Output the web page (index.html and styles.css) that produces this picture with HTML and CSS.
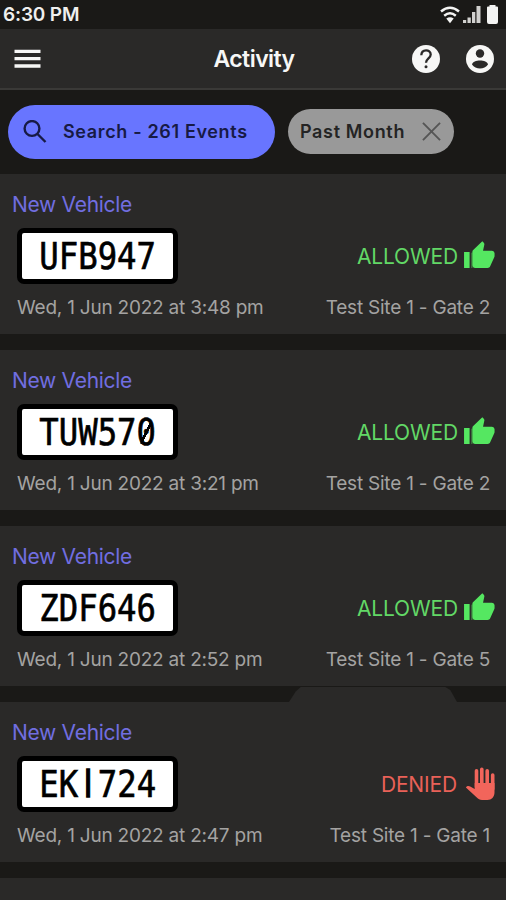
FILE: index.html
```
<!DOCTYPE html>
<html lang="en">
<head>
<meta charset="utf-8">
<title>Activity</title>
<link rel="stylesheet" href="styles.css">
</head>
<body>
<svg class="defs" aria-hidden="true">
  <symbol id="thumb" viewBox="0 0 24 24"><path d="M1 21h4V9H1v12zm22-11c0-1.100-.9-2-2-2h-6.310l.95-4.570.03-.32c0-.41-.17-.79-.44-1.060L14.170 1 7.590 7.590C7.220 7.950 7 8.450 7 9v10c0 1.100.9 2 2 2h9c.83 0 1.540-.5 1.840-1.220l3.020-7.050c.09-.23.14-.47.14-.73v-2z" transform="translate(-1 0) scale(1.040 1)"/><path d="M5.200 9.500h1.300V21H5.200z" opacity=".35"/></symbol>
  <symbol id="hand" viewBox="0 0 30 34"><g fill="none" stroke-width="3.600" stroke-linecap="round"><path d="M11 3.800V20M16.300 2.300V20M21.700 3.800V20M27.200 8V22"/></g><path d="M9.200 16H29v9.500c0 4.500-3 7.500-7 7.500h-5.500c-2.200 0-3.800-.8-5.200-2.400L.4 20.600c1.200-1.700 2.800-1.900 4.300-1L9.200 22z"/></symbol>
</svg>
<div class="page">
<div class="status-bar">
  <span class="clock">6:30 PM</span>
  <svg class="signals" viewBox="0 0 58 20" aria-hidden="true">
    <g fill="none" stroke="#f4f4f3" stroke-width="2.500"><path d="M.5 6.500q9-7.500 18 0"/><path d="M3.700 10.700q5.800-4.800 11.600 0"/></g>
    <path fill="#f4f4f3" d="M5.800 13.500q3.700-2.600 7.400 0L9.500 18.300z"/>
    <g fill="#d2d1cf"><path d="M22.500 15h3.200v3h-3.200zM27 12.500h3.300V18H27zM31.500 7h3.300v11h-3.300zM36 1h4v17h-4z"/></g>
    <path fill="#f4f4f3" d="M49 0h6v1.500h1.500q1 0 1 1V17q0 2-2 2h-7q-2 0-2-2V2.500q0-1 1-1H49z"/>
  </svg>
</div>
<header class="app-bar">
  <svg class="menu" viewBox="0 0 27 19"><path d="M.5 2.300h26M.5 9.700h26M.5 17h26"/></svg>
  <h1>Activity</h1>
  <div class="actions">
    <svg viewBox="0 0 28 28"><circle cx="14" cy="14" r="14" fill="#f7f7f6"/><path d="M9.300 10.200c.2-6.500 9.400-6.200 9.400-.7 0 3.700-4.700 4.100-4.700 8.300" fill="none" stroke="#2a2928" stroke-width="2.300"/><circle cx="14" cy="21.800" r="1.500" fill="#2a2928"/></svg>
    <svg viewBox="0 0 28 28"><circle cx="14" cy="14" r="14" fill="#f7f7f6"/><circle cx="14" cy="8.500" r="4.200" fill="#2a2928"/><path fill="#2a2928" d="M6 19.500c1-5.300 15-5.300 16 0-3.500 5.200-12.500 5.200-16 0z"/></svg>
  </div>
</header>
<div class="filters">
  <div class="search"><svg viewBox="0 0 24 24"><circle cx="9" cy="8.500" r="7.400"/><path d="M14.500 14l8 8"/></svg><span>Search - 261 Events</span></div>
  <div class="chip"><span>Past Month</span><svg viewBox="0 0 20 20"><path d="M1 1l18 18M19 1L1 19"/></svg></div>
</div>
<main class="events">
  <article class="event">
    <h2>New Vehicle</h2>
    <div class="row"><div class="plate"><span>UFB947</span></div><div class="result allowed"><span>ALLOWED</span><svg><use href="#thumb"/></svg></div></div>
    <div class="meta"><time>Wed, 1 Jun 2022 at 3:48 pm</time><span>Test Site 1 - Gate 2</span></div>
  </article>
  <article class="event">
    <h2>New Vehicle</h2>
    <div class="row"><div class="plate"><span>TUW57<i class="zero">0</i></span></div><div class="result allowed"><span>ALLOWED</span><svg><use href="#thumb"/></svg></div></div>
    <div class="meta"><time>Wed, 1 Jun 2022 at 3:21 pm</time><span>Test Site 1 - Gate 2</span></div>
  </article>
  <article class="event">
    <h2>New Vehicle</h2>
    <div class="row"><div class="plate"><span>ZDF646</span></div><div class="result allowed"><span>ALLOWED</span><svg><use href="#thumb"/></svg></div></div>
    <div class="meta"><time>Wed, 1 Jun 2022 at 2:52 pm</time><span>Test Site 1 - Gate 5</span></div>
  </article>
  <article class="event tabbed">
    <h2>New Vehicle</h2>
    <div class="row"><div class="plate"><span>EK<i class="stem">I</i>724</span></div><div class="result denied"><span>DENIED</span><svg><use href="#hand"/></svg></div></div>
    <div class="meta"><time>Wed, 1 Jun 2022 at 2:47 pm</time><span>Test Site 1 - Gate 1</span></div>
  </article>
  <article class="event"></article>
</main>
</div>
</body>
</html>
```
FILE: styles.css
```
* { box-sizing: border-box; }
html { background: #2a2928; }
body { margin: 0; background: #2a2928; font-family: Inter, sans-serif; }
.page { height: 900px; overflow: hidden; background: #1a1917; }
.defs { display: none; }
.status-bar { height: 29px; display: flex; justify-content: space-between; padding: 5px 7px 0 3px; }
.clock { color: #efefee; font-size: 19px; font-weight: 600; line-height: 20px; white-space: nowrap; letter-spacing: -.15px; }
.signals { width: 59px; height: 20px; }
.app-bar { height: 61px; display: grid; grid-template-columns: 1fr auto 1fr; align-items: center; padding: 0 12px 0 14px; background: #2a2928; border-bottom: 2px solid #3a3937; }
.menu { width: 27px; height: 19px; stroke: #f7f7f6; stroke-width: 3.300; }
h1 { margin: 0; color: #f7f7f6; font-size: 23px; font-weight: 600; line-height: 30px; letter-spacing: -.55px; }
.actions { display: flex; justify-content: flex-end; gap: 26px; }
.actions svg { width: 28px; height: 28px; }
.filters { height: 84px; display: flex; align-items: center; gap: 13px; padding: 0 8px 1px; }
.search { width: 267px; height: 54px; border-radius: 27px; background: #6875ff; display: flex; align-items: center; padding-left: 15px; gap: 16px; color: #171a45; font-size: 18px; font-weight: 600; letter-spacing: .65px; white-space: nowrap; }
.search svg { width: 24px; height: 24px; fill: none; stroke: #171a45; stroke-width: 2.400; }
.chip { width: 166px; height: 45px; border-radius: 23px; background: #999; display: flex; align-items: center; justify-content: space-between; padding: 0 13px 0 12px; color: #242424; font-size: 18px; font-weight: 600; letter-spacing: .65px; white-space: nowrap; }
.chip svg { width: 19px; height: 19px; stroke: #555; stroke-width: 2; }
.events { display: grid; grid-template-rows: repeat(4, 160px) 22px; gap: 16px; }
.event { background: #2a2928; padding: 18px 10px 0 12px; position: relative; }
h2 { margin: 0; color: #716ee0; font-size: 21px; font-weight: 400; line-height: 26px; letter-spacing: -.3px; }
.row { height: 56px; margin-top: 10px; display: flex; justify-content: space-between; align-items: center; padding-left: 5px; }
.plate { width: 161px; height: 56px; border: 5px solid #000; border-radius: 7px; background: #fff; display: flex; align-items: center; justify-content: center; }
.plate span { font: 38px/46px "DejaVu Sans Mono", monospace; color: #000; -webkit-text-stroke: .7px #000; transform: scaleX(.85); }
.plate i { font-style: normal; }
.zero { position: relative; }
.zero::after { content: ""; position: absolute; left: 5px; top: 12px; width: 13px; height: 22px; background: linear-gradient(to bottom right, transparent 43%, #000 43%, #000 57%, transparent 57%); }
.plate .stem { display: inline-block; width: 23px; line-height: 40px; text-align: center; font-family: Inter, sans-serif; -webkit-text-stroke: 1.300px #000; }
.result { display: flex; align-items: center; font-size: 21px; letter-spacing: -.15px; gap: 6px; }
.result svg { width: 32px; height: 32px; }
.allowed { color: #62d866; }
.allowed svg { fill: #55e761; }
.denied { color: #e96158; gap: 8px; }
.denied svg { width: 31px; height: 34px; fill: #f2655b; stroke: #f2655b; stroke-width: 0; }
.meta { margin-top: 11px; padding: 0 6px 0 5px; display: flex; justify-content: space-between; color: #a4a3a2; font-size: 19px; line-height: 26px; letter-spacing: -.22px; white-space: nowrap; }
.tabbed::before { content: ""; position: absolute; left: 289px; top: -15px; width: 168px; height: 15px; background: #2a2928; clip-path: polygon(0 100%, 4% 30%, 7% 0, 93% 0, 96% 20%, 100% 100%); }
```
